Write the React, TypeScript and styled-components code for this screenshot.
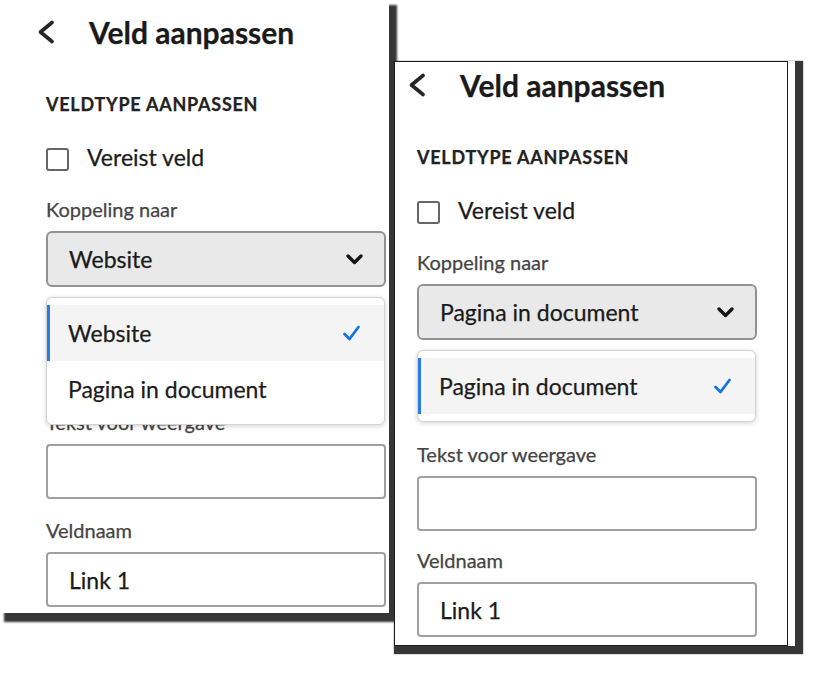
import React from "react";
import styled, {createGlobalStyle} from "styled-components";

const GlobalStyle = createGlobalStyle`
  html, body {
    margin: 0;
    padding: 0;
    background: #ffffff;
  }

  body {
    font-family: Lato, "Open Sans", sans-serif;
    color: #1c1c1c;
  }
`

const Desktop = styled.div`
  position: relative;
  width: 816px;
  height: 674px;
  overflow: hidden;
  background: #ffffff;
`

// each screenshot is a window lying on the canvas
const Shot = styled.section<{ $x: number; $y: number; $w: number; $h: number; $shadow: string; $gutter?: number }>`
  position: absolute;
  left: ${p => p.$x}px;
  top: ${p => p.$y}px;
  width: ${p => p.$w}px;
  height: ${p => p.$h}px;
  box-sizing: border-box;
  padding-right: ${p => p.$gutter ?? 0}px;
  background: #ffffff;
  box-shadow: ${p => p.$shadow};
`

const Frame = styled.div<{ $framed?: boolean; $padTop: number; $padLeft: number }>`
  height: 100%;
  box-sizing: border-box;
  border: ${p => (p.$framed ? "1px solid #1c1c1c" : "none")};
  padding: ${p => p.$padTop}px 0 0 ${p => p.$padLeft}px;
  overflow: hidden;
`

const Content = styled.div`
  width: 340px;
  display: flex;
  flex-direction: column;
  -webkit-text-stroke: 0.25px currentColor;
`

const Header = styled.header`
  display: flex;
  align-items: center;
  gap: 34px;
  height: 36px;
  margin-left: -9px;
`

const Title = styled.h1`
  margin: 0;
  font-size: 30px;
  line-height: 36px;
  font-weight: 700;
  color: #1a1a1a;
`

const SectionTitle = styled.h2`
  margin: 43px 0 0;
  font-size: 18px;
  line-height: 22px;
  font-weight: 700;
  letter-spacing: 0.75px;
  color: #222222;
`

const CheckRow = styled.label`
  display: flex;
  align-items: center;
  gap: 18px;
  margin-top: 28px;
  height: 28px;
  font-size: 23px;
  line-height: 28px;
  color: #1c1c1c;
`

const Box = styled.span`
  width: 23px;
  height: 23px;
  box-sizing: border-box;
  border: 2px solid #666666;
  border-radius: 3px;
  margin-top: 4px;
`

const Field = styled.div<{ $top: number }>`
  display: flex;
  flex-direction: column;
  gap: 10px;
  margin-top: ${p => p.$top}px;
`

const Label = styled.span`
  font-size: 20px;
  line-height: 24px;
  color: #444444;
`

const SelectWrap = styled.div`
  position: relative;
`

const SelectBox = styled.div`
  height: 56px;
  box-sizing: border-box;
  display: flex;
  align-items: center;
  justify-content: space-between;
  padding: 0 21px 0 21px;
  background: #e9e9e9;
  border: 2px solid #929292;
  border-radius: 6px;
  font-size: 23px;
  color: #1a1a1a;
`

const TextInput = styled.div`
  height: 55px;
  box-sizing: border-box;
  display: flex;
  align-items: center;
  padding: 0 21px;
  background: #ffffff;
  border: 2px solid #a0a0a0;
  border-radius: 4px;
  font-size: 23px;
  color: #1a1a1a;
`

const Popover = styled.ul`
  position: absolute;
  z-index: 2;
  top: calc(100% + 10px);
  left: 0;
  width: 339px;
  box-sizing: border-box;
  margin: 0;
  padding: 7px 0;
  list-style: none;
  background: #ffffff;
  border: 1px solid #d2d2d2;
  border-radius: 6px;
  box-shadow: 0 1px 5px rgba(0, 0, 0, 0.18);
`

const Option = styled.li<{ $selected?: boolean }>`
  position: relative;
  height: 56px;
  display: flex;
  align-items: center;
  justify-content: space-between;
  padding: 0 23px 0 21px;
  background: ${p => (p.$selected ? "#f4f4f4" : "transparent")};
  font-size: 23px;
  color: #1c1c1c;

  &::before {
    content: "";
    position: absolute;
    left: 0;
    top: 0;
    bottom: 0;
    width: 3px;
    background: ${p => (p.$selected ? "#2d7be6" : "transparent")};
  }
`

const BackIcon = () => (
    <svg width="18" height="24" viewBox="0 0 18 24" fill="none">
        <path d="M15 2.5 L3.5 12 L15 21.5" stroke="#262626" strokeWidth="3.6" strokeLinecap="round" strokeLinejoin="round"/>
    </svg>
);

const ChevronDown = () => (
    <svg width="17" height="11" viewBox="0 0 17 11" fill="none">
        <path d="M2 2 L8.5 8.5 L15 2" stroke="#151515" strokeWidth="3.3" strokeLinecap="round" strokeLinejoin="round"/>
    </svg>
);

const CheckMark = () => (
    <svg width="19" height="18" viewBox="0 0 19 18" fill="none">
        <path d="M2.5 10 L7.5 15 L16.5 3" stroke="#1473e6" strokeWidth="2.8" strokeLinecap="round" strokeLinejoin="round"/>
    </svg>
);

interface PanelProps {
    value: string;
    options: string[];
    textGap: number;
    nameGap: number;
}

function FieldPanel({value, options, textGap, nameGap}: PanelProps) {
    return (
        <Content>
            <Header>
                <BackIcon/>
                <Title>Veld aanpassen</Title>
            </Header>
            <SectionTitle>VELDTYPE AANPASSEN</SectionTitle>
            <CheckRow>
                <Box/>
                Vereist veld
            </CheckRow>
            <Field $top={26}>
                <Label>Koppeling naar</Label>
                <SelectWrap>
                    <SelectBox>
                        {value}
                        <ChevronDown/>
                    </SelectBox>
                    <Popover>
                        {options.map(option => (
                            <Option key={option} $selected={option === value}>
                                {option}
                                {option === value && <CheckMark/>}
                            </Option>
                        ))}
                    </Popover>
                </SelectWrap>
            </Field>
            <Field $top={textGap}>
                <Label>Tekst voor weergave</Label>
                <TextInput/>
            </Field>
            <Field $top={nameGap}>
                <Label>Veldnaam</Label>
                <TextInput>Link 1</TextInput>
            </Field>
        </Content>
    );
}

export default function App() {
    return (
        <Desktop>
            <GlobalStyle/>
            <Shot $x={0} $y={0} $w={389} $h={613} $shadow="6px 7px 2px 2px #363636">
                <Frame $padTop={14} $padLeft={46}>
                    <FieldPanel value="Website" options={["Website", "Pagina in document"]} textGap={123} nameGap={19}/>
                </Frame>
            </Shot>
            <Shot $x={394} $y={61} $w={401} $h={585} $gutter={7} $shadow="4px 4px 1px 4px #363636">
                <Frame $framed $padTop={5} $padLeft={22}>
                    <FieldPanel value="Pagina in document" options={["Pagina in document"]} textGap={102} nameGap={17}/>
                </Frame>
            </Shot>
        </Desktop>
    );
}
